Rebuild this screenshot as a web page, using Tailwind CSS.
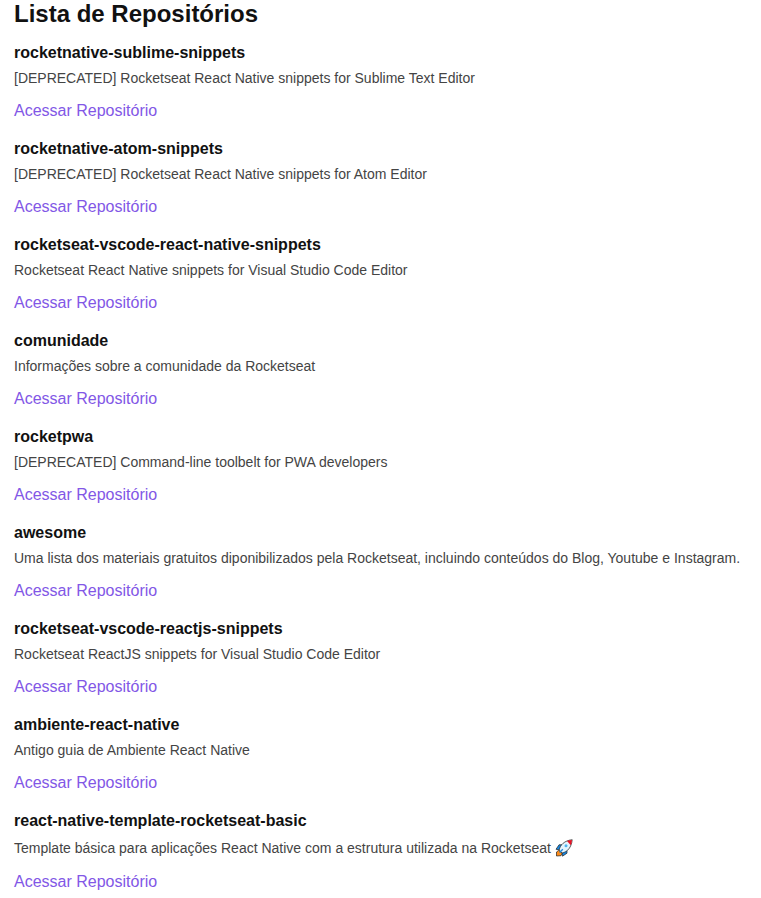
<!DOCTYPE html>
<html lang="pt-BR"><head><meta charset="utf-8"><title>Lista de Repositórios</title>
<script src="https://cdn.jsdelivr.net/npm/@tailwindcss/browser@4"></script></head>
<body class="bg-white h-[898px] overflow-hidden pl-[14px] font-['Liberation_Sans',Arial,sans-serif] text-[#111]">
<h1 class="h-[42px] text-2xl leading-7 font-bold">Lista de Repositórios</h1>
<ul id="list" class="flex flex-col whitespace-nowrap"></ul>
<template id="row"><li class="h-24"><strong class="block text-base leading-[22px] font-bold"></strong><p class="mt-[5px] flex text-sm leading-[18px] text-[#444]"><span></span></p><a href="#" class="mt-3 inline-block text-base leading-6 text-[#8257e6]">Acessar Repositório</a></li></template>
<template id="rocket"><svg class="ml-1 h-5 w-[18px]" viewBox="0 0 18 20" role="img" aria-label="Foguete">
<path d="M3.500 11.500 1.500 13v4l4.500-.3 1.500-2.700z" fill="#ff8c1a" stroke="#222" stroke-width=".7"/>
<path d="M7 5.800H4L1 10.300l4.500.7zM12 11v3.200l-4.500 3-.6-4.500z" fill="#1787e0" stroke="#222" stroke-width=".7"/>
<path d="M4.200 11C5 6 9.500 1.500 17.200.700 16.500 8.300 12.500 13 7 14z" fill="#e4f4fd" stroke="#222" stroke-width=".7"/>
<path d="M12 1.900Q14.500 1 17 .900 16.800 3.800 15.700 6.200z" fill="#e81224"/>
<circle cx="11" cy="6.800" r="1.500" fill="#4eb5ee"/>
<path d="m7.800 10.200-3.200 3.300" stroke="#1787e0" stroke-width="1.300"/>
</svg></template>
<script>
const repos=[
["rocketnative-sublime-snippets","[DEPRECATED] Rocketseat React Native snippets for Sublime Text Editor"],
["rocketnative-atom-snippets","[DEPRECATED] Rocketseat React Native snippets for Atom Editor"],
["rocketseat-vscode-react-native-snippets","Rocketseat React Native snippets for Visual Studio Code Editor"],
["comunidade","Informações sobre a comunidade da Rocketseat"],
["rocketpwa","[DEPRECATED] Command-line toolbelt for PWA developers"],
["awesome","Uma lista dos materiais gratuitos diponibilizados pela Rocketseat, incluindo conteúdos do Blog, Youtube e Instagram."],
["rocketseat-vscode-reactjs-snippets","Rocketseat ReactJS snippets for Visual Studio Code Editor"],
["ambiente-react-native","Antigo guia de Ambiente React Native"],
["react-native-template-rocketseat-basic","Template básica para aplicações React Native com a estrutura utilizada na Rocketseat",true]];
for(const [n,d,rocket] of repos){
  const r=document.getElementById('row').content.cloneNode(true);
  r.querySelector('strong').textContent=n;
  r.querySelector('span').textContent=d;
  if(rocket){
    const p=r.querySelector('p');
    p.className='mt-[7px] flex h-[19px] text-sm leading-[18px] text-[#444]';
    p.append(document.getElementById('rocket').content.cloneNode(true));
  }
  document.getElementById('list').append(r);
}
</script></body></html>
